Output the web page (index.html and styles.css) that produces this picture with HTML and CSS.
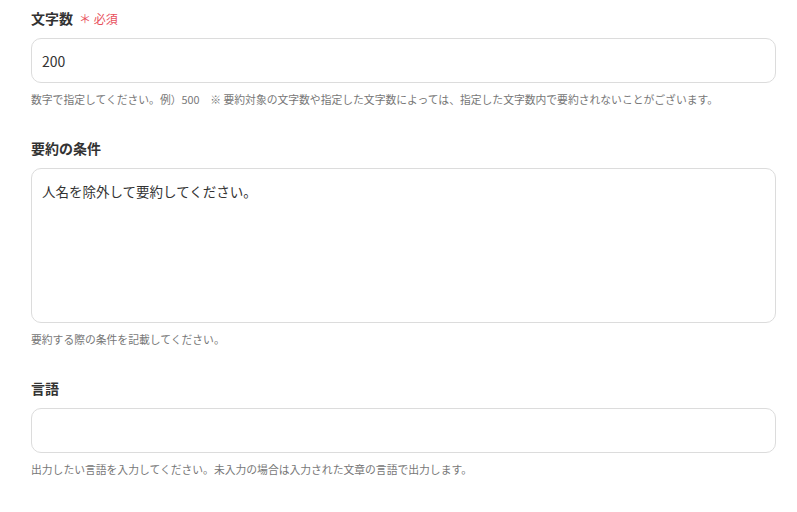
FILE: index.html
```html
<!DOCTYPE html>
<html lang="ja">
<head>
    <meta charset="UTF-8">
    <meta name="viewport" content="width=device-width, initial-scale=1.0">
    <title>要約の設定</title>
    <link rel="stylesheet" href="styles.css">
</head>
<body>

    <div class="form">
        <!-- 文字数 -->
        <div class="field">
            <label class="field-label" for="length">文字数 <span class="required">＊ 必須</span></label>
            <input class="text-input" type="text" id="length" value="200">
            <p class="help">数字で指定してください。例）500　※ 要約対象の文字数や指定した文字数によっては、指定した文字数内で要約されないことがございます。</p>
        </div>

        <!-- 要約の条件 -->
        <div class="field">
            <label class="field-label" for="condition">要約の条件</label>
            <textarea class="text-area" id="condition">人名を除外して要約してください。</textarea>
            <p class="help">要約する際の条件を記載してください。</p>
        </div>

        <!-- 言語 -->
        <div class="field">
            <label class="field-label" for="lang">言語</label>
            <input class="text-input" type="text" id="lang" value="">
            <p class="help">出力したい言語を入力してください。未入力の場合は入力された文章の言語で出力します。</p>
        </div>
    </div>

</body>
</html>
```

FILE: styles.css
```css
/* Basic resets and body styling */
* {
    margin: 0;
    padding: 0;
    box-sizing: border-box;
}

body {
    font-family: "Noto Sans CJK JP", "Noto Sans", sans-serif;
    background-color: #fff;
    color: #333;
    padding: 8px 21px 0 31px;
}

.form {
    display: flex;
    flex-direction: column;
    gap: 31px;
}

.field {
    display: flex;
    flex-direction: column;
}

/* Label styling */
.field-label {
    display: flex;
    align-items: center;
    height: 20px;
    font-size: 14px;
    font-weight: bold;
    color: #333;
    margin-bottom: 10px;
}

.required {
    color: #e8505b;
    font-size: 12px;
    font-weight: normal;
    margin-left: 6px;
}

/* Inputs */
.text-input, .text-area {
    width: 100%;
    border: 1px solid #dcdcdc;
    border-radius: 10px;
    font-family: inherit;
    color: #333;
    padding: 0 10px;
    background: #fff;
    outline: none;
}

.text-input {
    height: 45px;
    font-size: 14px;
}

.text-area {
    height: 155px;
    padding: 12px 10px;
    font-size: 13.5px;
    line-height: 20px;
    resize: none;
}

.help {
    font-size: 10.8px;
    line-height: 16px;
    color: #777;
    margin-top: 8px;
}
```
